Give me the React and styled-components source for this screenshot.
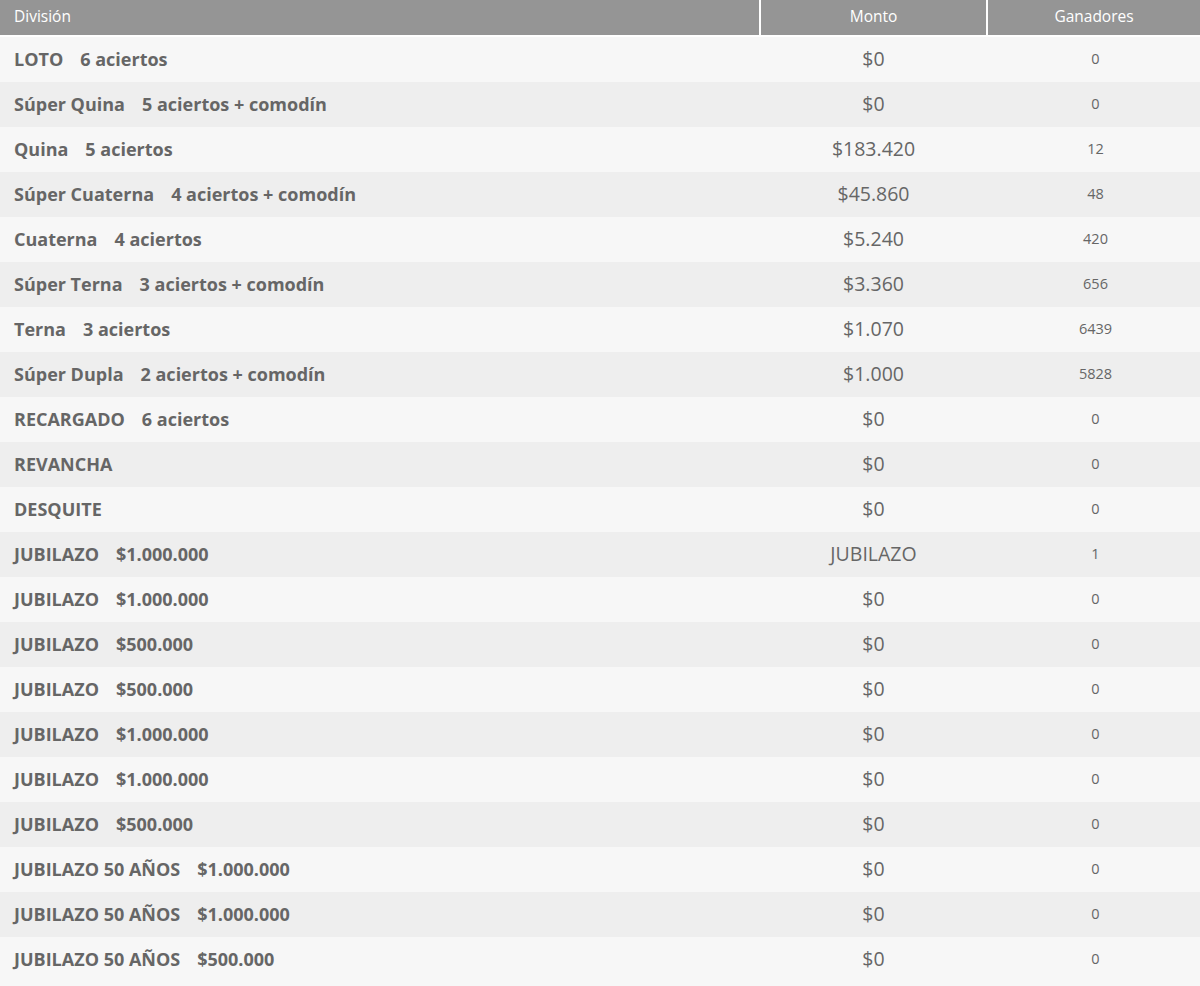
import React from 'react';
import styled, { createGlobalStyle } from 'styled-components';

const GlobalStyle = createGlobalStyle`
  html, body {
    margin: 0;
    padding: 0;
    background: #f7f7f7;
    font-family: "Open Sans", "Liberation Sans", sans-serif;
  }
`;

const Table = styled.div`
  width: 1200px;
  display: flex;
  flex-direction: column;
`;

const Grid = styled.div`
  display: grid;
  grid-template-columns: 759px 225px 212px;
  column-gap: 2px;
`;

const Head = styled(Grid)`
  background: #ffffff;
  height: 35px;
  border-bottom: 2px solid #ffffff;
`;

const HeadCell = styled.div`
  background: #959595;
  color: #ffffff;
  font-size: 15.5px;
  display: flex;
  align-items: center;
  padding-bottom: 3px;
  justify-content: ${p => (p.$left ? 'flex-start' : 'center')};
  padding-left: ${p => (p.$left ? '14px' : '0')};
`;

const Row = styled(Grid)`
  height: 45px;
  box-sizing: border-box;
  padding-bottom: 2px;
  align-items: center;
  background: ${p => (p.$alt ? '#eeeeee' : '#f7f7f7')};
  color: #666666;
`;

const Division = styled.div`
  padding-left: 14px;
  font-size: 18px;
  font-weight: 700;
  display: flex;
  gap: 17px;
`;

const Monto = styled.div`
  text-align: center;
  font-size: 19.5px;
`;

const Ganadores = styled.div`
  text-align: center;
  font-size: 14.5px;
  padding-left: 3px;
`;

const rows = [
  ['LOTO', '6 aciertos', '$0', '0'],
  ['Súper Quina', '5 aciertos + comodín', '$0', '0'],
  ['Quina', '5 aciertos', '$183.420', '12'],
  ['Súper Cuaterna', '4 aciertos + comodín', '$45.860', '48'],
  ['Cuaterna', '4 aciertos', '$5.240', '420'],
  ['Súper Terna', '3 aciertos + comodín', '$3.360', '656'],
  ['Terna', '3 aciertos', '$1.070', '6439'],
  ['Súper Dupla', '2 aciertos + comodín', '$1.000', '5828'],
  ['RECARGADO', '6 aciertos', '$0', '0'],
  ['REVANCHA', '', '$0', '0'],
  ['DESQUITE', '', '$0', '0'],
  ['JUBILAZO', '$1.000.000', 'JUBILAZO', '1'],
  ['JUBILAZO', '$1.000.000', '$0', '0'],
  ['JUBILAZO', '$500.000', '$0', '0'],
  ['JUBILAZO', '$500.000', '$0', '0'],
  ['JUBILAZO', '$1.000.000', '$0', '0'],
  ['JUBILAZO', '$1.000.000', '$0', '0'],
  ['JUBILAZO', '$500.000', '$0', '0'],
  ['JUBILAZO 50 AÑOS', '$1.000.000', '$0', '0'],
  ['JUBILAZO 50 AÑOS', '$1.000.000', '$0', '0'],
  ['JUBILAZO 50 AÑOS', '$500.000', '$0', '0'],
];

export default function App() {
  return (
    <>
      <GlobalStyle />
      <Table>
        <Head>
          <HeadCell $left>División</HeadCell>
          <HeadCell>Monto</HeadCell>
          <HeadCell>Ganadores</HeadCell>
        </Head>
        {rows.map(([name, detail, monto, gan], i) => (
          <Row key={i} $alt={i % 2 === 1}>
            <Division>
              <span>{name}</span>
              {detail && <span>{detail}</span>}
            </Division>
            <Monto>{monto}</Monto>
            <Ganadores>{gan}</Ganadores>
          </Row>
        ))}
      </Table>
    </>
  );
}
